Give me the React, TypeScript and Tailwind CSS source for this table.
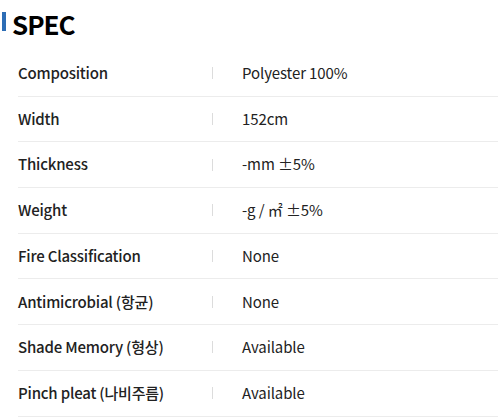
const SPECS: [string, string][] = [
  ['Composition', 'Polyester 100%'],
  ['Width', '152cm'],
  ['Thickness', '-mm ±5%'],
  ['Weight', '-g / ㎡ ±5%'],
  ['Fire Classification', 'None'],
  ['Antimicrobial (항균)', 'None'],
  ['Shade Memory (형상)', 'Available'],
  ['Pinch pleat (나비주름)', 'Available'],
];

export default function App() {
  return (
    <div className="w-[498px] h-[419px] bg-white text-[#222] overflow-hidden font-['Noto_Sans_CJK_KR','Noto_Sans',sans-serif]">
      {/* Title */}
      <div className="flex items-start pt-[12px] pl-[2px] h-[51px]">
        <span className="w-[4px] h-[19px] bg-[#2d6db5]" />
        <h2 className="ml-[6px] -mt-[4px] text-[26px] font-bold leading-[32px] tracking-[-1px] text-black">SPEC</h2>
      </div>

      {/* Spec table */}
      <div className="ml-[18px]">
        {SPECS.map(([label, value]) => (
          <div key={label} className="flex items-center h-[45.7px] border-b border-[#ececec]">
            <div className="w-[194px] text-[15px] font-medium tracking-[-0.2px]">{label}</div>
            <span className="w-px h-[12px] bg-[#dcdcdc]" />
            <div className="ml-[29px] text-[15px] tracking-[-0.1px]">{value}</div>
          </div>
        ))}
      </div>
    </div>
  );
}
